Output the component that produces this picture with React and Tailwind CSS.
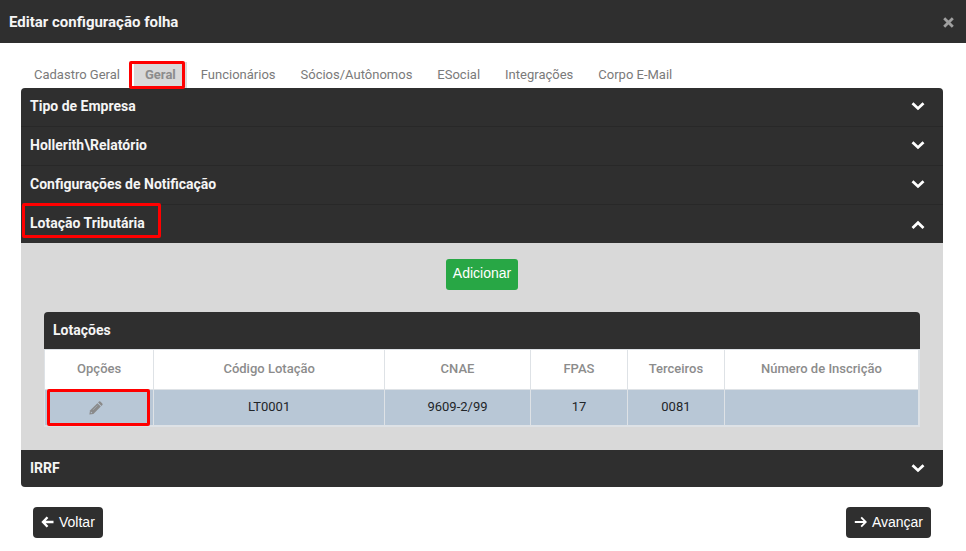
import React, { useState } from 'react';

const tabs = ['Cadastro Geral', 'Geral', 'Funcionários', 'Sócios/Autônomos', 'ESocial', 'Integrações', 'Corpo E-Mail'];

const lotacoes = [
  { codigo: 'LT0001', cnae: '9609-2/99', fpas: '17', terceiros: '0081', inscricao: '' },
];

function Chevron({ open }) {
  return (
    <svg width="14" height="10" viewBox="0 0 14 10" fill="none" stroke="#fff" strokeWidth="2.8" className={open ? 'mt-1' : ''}>
      <path d={open ? 'M1.5 8 L7 2.8 L12.5 8' : 'M1.5 2.2 L7 7.4 L12.5 2.2'} />
    </svg>
  );
}

function Highlight({ className }) {
  return <span className={`absolute border-3 border-[#ff0000] rounded-xs pointer-events-none ${className}`} />;
}

function Section({ title, open, highlighted, last, onToggle, children }) {
  return (
    <div>
      <h2>
        <button
          type="button"
          aria-expanded={open}
          onClick={onToggle}
          className={`relative w-full flex items-center justify-between bg-[#2f2f2f] pl-[9px] pr-[18px] pb-0.5 text-sm font-bold text-[#f5f5f5] cursor-pointer ${last ? 'h-[37px]' : open ? 'h-[38px]' : 'h-[39px] border-b border-[#282828]'}`}
        >
          <span>{title}</span>
          <Chevron open={open} />
          {highlighted && <Highlight className="left-px -top-0.5 w-[139px] h-[35px]" />}
        </button>
      </h2>
      {open && children}
    </div>
  );
}

function LotacoesTable() {
  return (
    <div>
      <h3 className="h-[37px] flex items-center bg-[#2f2f2f] rounded-t px-[9px] pb-0.5 text-sm font-bold text-[#f5f5f5]">Lotações</h3>
      <div className="border-r border-b border-[#dee2e6]">
        <table className="w-full table-fixed border-collapse text-center text-[13px] leading-5">
          <thead>
            <tr className="h-10 bg-white text-[#8c8c8c]">
              <th className="w-[12.5%] border border-[#dee2e6] pb-0.5 font-medium">Opções</th>
              <th className="w-[26.4%] border border-[#dee2e6] pb-0.5 font-medium">Código Lotação</th>
              <th className="w-[16.7%] border border-[#dee2e6] pb-0.5 font-medium">CNAE</th>
              <th className="w-[11.1%] border border-[#dee2e6] pb-0.5 font-medium">FPAS</th>
              <th className="w-[11.1%] border border-[#dee2e6] pb-0.5 font-medium">Terceiros</th>
              <th className="border border-[#dee2e6] pb-0.5 font-medium">Número de Inscrição</th>
            </tr>
          </thead>
          <tbody>
            {lotacoes.map((item) => (
              <tr key={item.codigo} className="h-9 bg-[#b8c7d6] text-[#212529]">
                <td className="relative border border-[#dee2e6]">
                  <button type="button" aria-label="Editar" className="block mx-auto pr-1.5 cursor-pointer">
                    <svg width="14" height="14" viewBox="0 0 14 14" fill="#8a8a8a">
                      <path d="M0.4 13.6 L1 9.6 L8.4 2.2 L11.8 5.6 L4.4 13 Z" />
                      <path d="M9.1 1.5 L10 0.6 Q10.8 0 11.6 0.7 L13.3 2.4 Q14 3.2 13.4 4 L12.5 4.9 Z" />
                      <path d="M1.9 10.6 L3.4 12.1 L2.5 12.3 L1.7 11.5 Z" fill="#b8c7d6" />
                      <path d="M4 8.9 L8.4 4.5" stroke="#a4b0bc" strokeWidth="0.7" />
                    </svg>
                  </button>
                  <Highlight className="left-0.5 -top-px right-[3px] -bottom-px" />
                </td>
                <td className="border border-[#dee2e6] pb-0.5">{item.codigo}</td>
                <td className="border border-[#dee2e6] pb-0.5">{item.cnae}</td>
                <td className="border border-[#dee2e6] pb-0.5">{item.fpas}</td>
                <td className="border border-[#dee2e6] pb-0.5">{item.terceiros}</td>
                <td className="border border-[#dee2e6] pb-0.5">{item.inscricao}</td>
              </tr>
            ))}
          </tbody>
        </table>
      </div>
    </div>
  );
}

export default function App() {
  const [tab, setTab] = useState('Geral');
  const [opened, setOpened] = useState('Lotação Tributária');

  const toggle = (name) => setOpened(opened === name ? '' : name);

  return (
    <div className="min-h-screen bg-white font-['Roboto',sans-serif]">
      <header className="h-[43px] flex items-center justify-between bg-[#2f2f2f] pl-[9px] pr-3 pt-0.5">
        <h1 className="text-[15px] font-bold text-[#f5f5f5]">Editar configuração folha</h1>
        <button type="button" aria-label="Fechar" className="cursor-pointer">
          <svg width="11" height="11" viewBox="0 0 11 11" stroke="#a0a0a0" strokeWidth="2.8">
            <path d="M1.2 1.2 L9.8 9.8 M9.8 1.2 L1.2 9.8" />
          </svg>
        </button>
      </header>

      <main className="pl-[21px] pr-[23px] pt-[19px]">
        <nav className="flex gap-[3px] pl-0.5">
          {tabs.map((name) => (
            <button
              key={name}
              type="button"
              onClick={() => setTab(name)}
              className={`relative h-[26px] px-[11px] text-[13px] cursor-pointer ${tab === name ? 'bg-[#d9d9d9] font-bold text-[#8c8c8c]' : 'text-[#7a7a7a]'}`}
            >
              {name}
              {tab === name && <Highlight className="z-10 -left-[5px] -top-px right-0.5 -bottom-px" />}
            </button>
          ))}
        </nav>

        <div className="rounded overflow-hidden">
          <Section title="Tipo de Empresa" open={opened === 'Tipo de Empresa'} onToggle={() => toggle('Tipo de Empresa')} />
          <Section title="Hollerith\Relatório" open={opened === 'Hollerith\\Relatório'} onToggle={() => toggle('Hollerith\\Relatório')} />
          <Section title="Configurações de Notificação" open={opened === 'Configurações de Notificação'} onToggle={() => toggle('Configurações de Notificação')} />
          <Section title="Lotação Tributária" highlighted open={opened === 'Lotação Tributária'} onToggle={() => toggle('Lotação Tributária')}>
            <div className="bg-[#d9d9d9] px-[23px] pt-4 pb-[23px]">
              <div className="flex justify-center mb-[22px]">
                <button type="button" className="h-[31px] px-[7px] pb-1 rounded-[3px] bg-[#28a745] text-white text-sm font-['Liberation_Sans',sans-serif] cursor-pointer">
                  Adicionar
                </button>
              </div>
              <LotacoesTable />
            </div>
          </Section>
          <Section title="IRRF" last open={opened === 'IRRF'} onToggle={() => toggle('IRRF')} />
        </div>

        <div className="flex justify-between px-3 pt-5 pb-3 font-['Liberation_Sans',sans-serif] text-sm text-white">
          <button type="button" className="h-[31px] flex items-center gap-[5px] px-2 pb-0.5 rounded bg-[#2f2f2f] cursor-pointer">
            <svg width="13" height="12" viewBox="0 0 13 12" fill="none" stroke="#fff" strokeWidth="2.4">
              <path d="M6.5 1.2 L2 6 L6.5 10.8 M2 6 H12.5" />
            </svg>
            Voltar
          </button>
          <button type="button" className="h-[31px] flex items-center gap-[5px] px-2 pb-0.5 rounded bg-[#2f2f2f] cursor-pointer">
            <svg width="13" height="12" viewBox="0 0 13 12" fill="none" stroke="#fff" strokeWidth="1.8">
              <path d="M7.2 1.4 L11.8 6 L7.2 10.6 M11.8 6 H0.8" />
            </svg>
            Avançar
          </button>
        </div>
      </main>
    </div>
  );
}
